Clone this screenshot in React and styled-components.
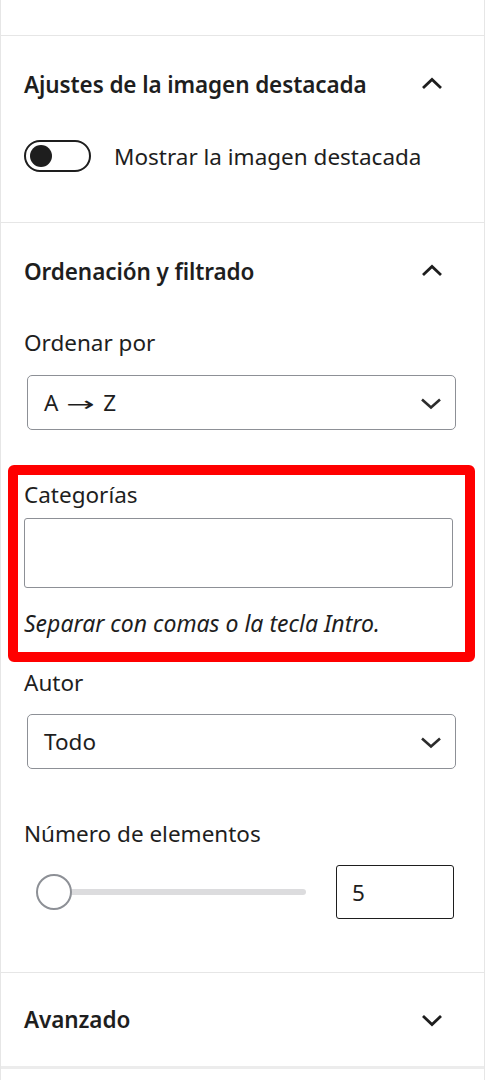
import React from 'react';
import styled, { createGlobalStyle } from 'styled-components';

const GlobalStyle = createGlobalStyle`
  * {
    box-sizing: border-box;
  }
  body {
    margin: 0;
    background: #ffffff;
    font-family: 'Noto Sans', 'Open Sans', sans-serif;
    color: #1e1e1e;
  }
`;

const Sidebar = styled.div`
  width: 485px;
  min-height: 1080px;
  border-left: 1px solid #e6e6e6;
  border-right: 1px solid #e6e6e6;
  background: #ffffff;
`;

const TopSpacer = styled.div`
  height: 36px;
  border-bottom: 1px solid #e6e6e6;
`;

const Section = styled.div`
  padding: 0 28px ${props => props.$bottom || 0}px 23px;
  border-bottom: ${props => (props.$last ? '3px solid #ececec' : '1px solid #e6e6e6')};
`;

const Header = styled.div`
  height: ${props => props.$height || 96}px;
  display: flex;
  align-items: center;
  justify-content: space-between;
  padding-right: 11px;
`;

const Title = styled.h2`
  margin: 0;
  font-size: 22.5px;
  font-weight: 600;
  letter-spacing: -0.1px;
`;

const ChevronIcon = ({ up }) => (
  <svg width="26" height="26" viewBox="0 0 26 26" fill="none">
    <path
      d={up ? 'M4 17 L13 8.5 L22 17' : 'M4 9 L13 17.5 L22 9'}
      stroke="#1e1e1e"
      strokeWidth="2.8"
    />
  </svg>
);

const ToggleRow = styled.label`
  display: flex;
  align-items: center;
  gap: 23px;
  margin-top: 8px;
  font-size: 22.5px;
`;

const Track = styled.span`
  width: 67px;
  height: 32px;
  border: 2px solid #1e1e1e;
  border-radius: 16px;
  display: flex;
  align-items: center;
  padding-left: 4px;
`;

const Knob = styled.span`
  width: 22px;
  height: 22px;
  border-radius: 50%;
  background: #1e1e1e;
`;

const Label = styled.div`
  font-size: 22.5px;
  line-height: 28px;
  margin-top: ${props => props.$top || 0}px;
`;

const SelectBox = styled.div`
  height: 55px;
  margin: ${props => props.$top || 0}px 0 0 3px;
  border: 1.5px solid #8d9096;
  border-radius: 5px;
  display: flex;
  align-items: center;
  justify-content: space-between;
  padding: 0 12px 0 16px;
  font-size: 22.5px;
`;

const Arrow = styled.span`
  display: inline-block;
  font-family: 'DejaVu Sans', sans-serif;
  font-size: 20px;
  margin: 0 14px;
  transform: scaleX(1.7);
`;

const SmallChevron = () => (
  <svg width="24" height="24" viewBox="0 0 24 24" fill="none">
    <path d="M3 8.5 L12 16.5 L21 8.5" stroke="#2c2c2c" strokeWidth="2.6" />
  </svg>
);

const Highlight = styled.div`
  margin: 35px -19px 0 -16px;
  border: 10px solid #ff0000;
  border-radius: 6px;
  padding: 6px 12px 15px 6px;
`;

const TextInput = styled.div`
  height: 70px;
  margin-top: 9px;
  border: 1.5px solid #8d9096;
  border-radius: 3px;
`;

const Help = styled.div`
  margin-top: 21px;
  font-size: 23px;
  line-height: 28px;
  font-style: italic;
`;

const RangeRow = styled.div`
  display: flex;
  align-items: center;
  margin-top: 17px;
`;

const RangeTrack = styled.div`
  position: relative;
  margin-left: 12px;
  width: 270px;
  height: 6px;
  background: #dcdcde;
  border-radius: 3px;
`;

const Thumb = styled.span`
  position: absolute;
  left: 0;
  top: 50%;
  width: 36px;
  height: 36px;
  transform: translateY(-50%);
  border: 2px solid #8d9096;
  border-radius: 50%;
  background: #ffffff;
`;

const NumberBox = styled.div`
  width: 118px;
  height: 54px;
  margin-left: 30px;
  border: 1.5px solid #1e1e1e;
  border-radius: 3px;
  display: flex;
  align-items: center;
  padding-left: 15px;
  font-size: 22.5px;
`;

export default function App() {
  return (
    <>
      <GlobalStyle />
      <Sidebar>
        <TopSpacer />
        <Section $bottom={50}>
          <Header>
            <Title>Ajustes de la imagen destacada</Title>
            <ChevronIcon up />
          </Header>
          <ToggleRow>
            <Track>
              <Knob />
            </Track>
            Mostrar la imagen destacada
          </ToggleRow>
        </Section>
        <Section $bottom={53}>
          <Header>
            <Title>Ordenación y filtrado</Title>
            <ChevronIcon up />
          </Header>
          <Label $top={10}>Ordenar por</Label>
          <SelectBox $top={18}>
            <span>
              A<Arrow>→</Arrow>Z
            </span>
            <SmallChevron />
          </SelectBox>
          <Highlight>
            <Label>Categorías</Label>
            <TextInput />
            <Help>Separar con comas o la tecla Intro.</Help>
          </Highlight>
          <Label $top={7}>Autor</Label>
          <SelectBox $top={17}>
            <span>Todo</span>
            <SmallChevron />
          </SelectBox>
          <Label $top={51}>Número de elementos</Label>
          <RangeRow>
            <RangeTrack>
              <Thumb />
            </RangeTrack>
            <NumberBox>5</NumberBox>
          </RangeRow>
        </Section>
        <Section $last>
          <Header $height={93}>
            <Title>Avanzado</Title>
            <ChevronIcon />
          </Header>
        </Section>
      </Sidebar>
    </>
  );
}
